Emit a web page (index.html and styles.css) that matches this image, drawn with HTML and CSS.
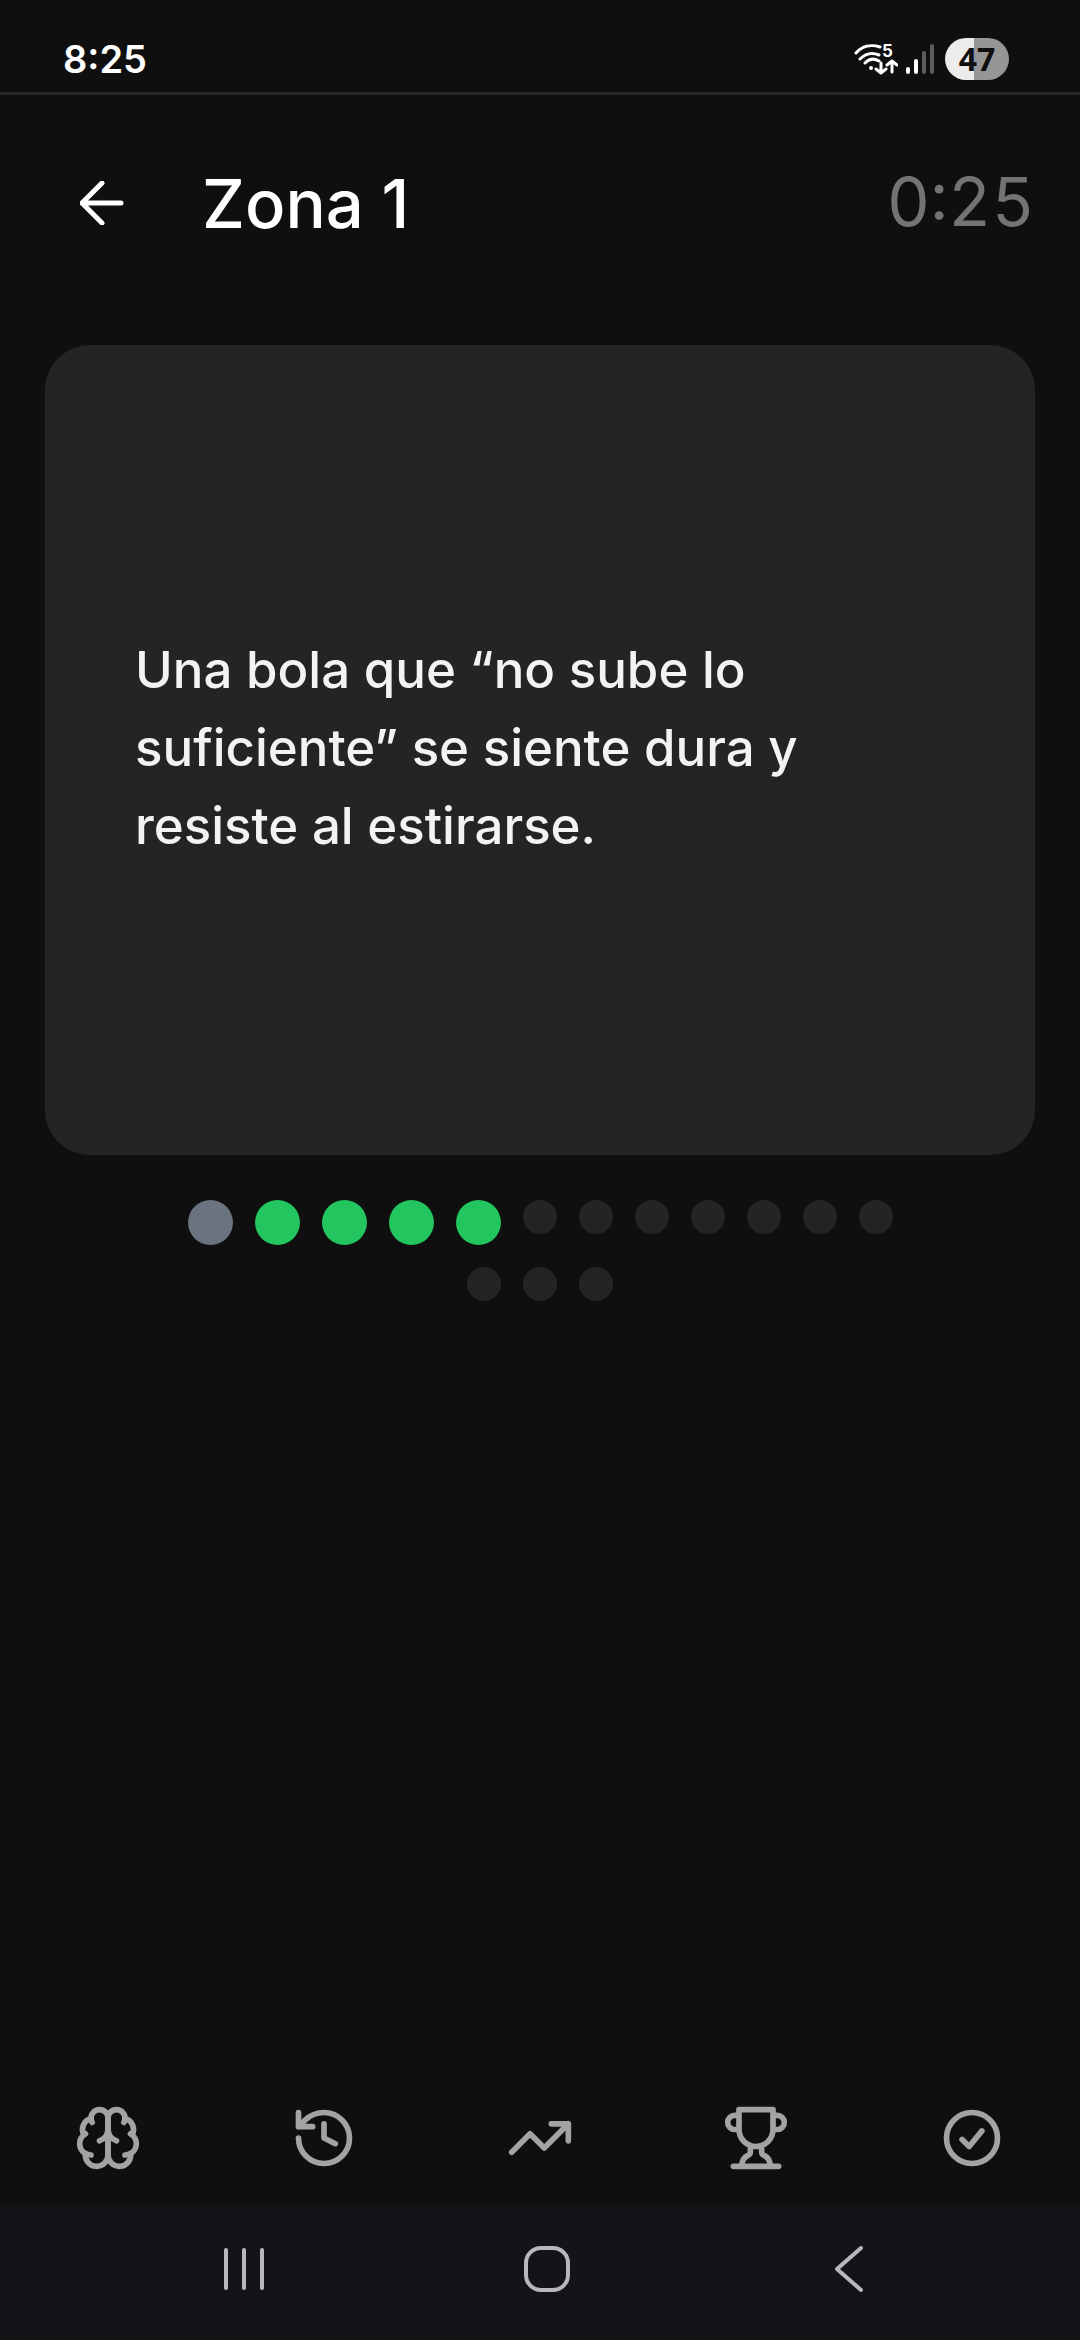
FILE: index.html
```html
<!DOCTYPE html>
<html lang="es">

<head>
    <meta charset="UTF-8">
    <meta name="viewport" content="width=device-width, initial-scale=1.0">
    <title>Zona 1</title>
    <link rel="stylesheet" href="styles.css">
</head>

<body>
    <div class="status-bar">
        <span class="clock">8:25</span>
        <div class="status-icons">
            <svg class="wifi" viewBox="0 0 44 36" aria-hidden="true">
                <path d="M2 12C8 5 17 3 26 6M6 18c5-5 12-7 19-4M11 22c4-4 9-5 14-2" />
                <circle cx="17" cy="27" r="2" />
                <text x="28" y="16">5</text>
                <path class="thin" d="M27 22v10m-5-4l5 4 5-4M38 31V20m-5 4l5-4 5 4" />
            </svg>
            <svg class="signal" viewBox="0 0 28 30" aria-hidden="true">
                <path d="M2 25v3M10 17v11" />
                <path class="off" d="M18 9v19M26 2v26" />
            </svg>
            <span class="battery">47</span>
        </div>
    </div>

    <header class="header">
        <button class="back" type="button" aria-label="Volver">
            <svg viewBox="0 0 44 44">
                <path d="M41 22H2M22 2L2 22l20 20" />
            </svg>
        </button>
        <h1>Zona 1</h1>
        <span class="timer">0:25</span>
    </header>

    <main class="content">
        <div class="card">
            <p>Una bola que “no sube lo suficiente” se siente dura y resiste al estirarse.</p>
        </div>
        <div class="dots">
            <span class="dot skipped"></span>
            <span class="dot done"></span>
            <span class="dot done"></span>
            <span class="dot done"></span>
            <span class="dot done"></span>
            <span class="dot"></span>
            <span class="dot"></span>
            <span class="dot"></span>
            <span class="dot"></span>
            <span class="dot"></span>
            <span class="dot"></span>
            <span class="dot"></span>
            <span class="dot"></span>
            <span class="dot"></span>
            <span class="dot"></span>
        </div>
    </main>

    <nav class="tabs">
        <a href="#entrenar" aria-label="Entrenar">
            <svg viewBox="0 0 24 24">
                <path d="M12 5a3 3 0 1 0-5.997.125 4 4 0 0 0-2.526 5.770 4 4 0 0 0 .556 6.588A4 4 0 1 0 12 18Z" />
                <path d="M12 5a3 3 0 1 1 5.997.125 4 4 0 0 1 2.526 5.770 4 4 0 0 1-.556 6.588A4 4 0 1 1 12 18Z" />
                <path d="M15 13a4.500 4.500 0 0 1-3-4 4.500 4.500 0 0 1-3 4" />
                <path d="M17.599 6.500a3 3 0 0 0 .399-1.375M6.003 5.125A3 3 0 0 0 6.401 6.500" />
                <path d="M3.477 10.896a4 4 0 0 1 .585-.396M19.938 10.500a4 4 0 0 1 .585.396" />
                <path d="M6 18a4 4 0 0 1-1.967-.516M19.967 17.484A4 4 0 0 1 18 18" />
            </svg>
        </a>
        <a href="#historial" aria-label="Historial">
            <svg viewBox="0 0 24 24">
                <path d="M3 12a9 9 0 1 0 9-9 9.750 9.750 0 0 0-6.740 2.740L3 8M3 3v5h5M12 7v5l4 2" />
            </svg>
        </a>
        <a href="#progreso" aria-label="Progreso">
            <svg viewBox="0 0 24 24">
                <path d="M2 17l6.500-6.500 5 5L22 7M16 7h6v6" />
            </svg>
        </a>
        <a href="#trofeos" aria-label="Trofeos">
            <svg viewBox="0 0 24 24">
                <path d="M6 9H4.500a2.500 2.500 0 0 1 0-5H6M18 9h1.500a2.500 2.500 0 0 0 0-5H18M4 22h16M10 14.660V17c0 .550-.470.980-.970 1.210C7.850 18.750 7 20.240 7 22M14 14.660V17c0 .550.470.980.970 1.210C16.150 18.750 17 20.240 17 22M18 2H6v7a6 6 0 0 0 12 0V2Z" />
            </svg>
        </a>
        <a href="#completado" aria-label="Completado">
            <svg viewBox="0 0 24 24">
                <circle cx="12" cy="12" r="9" />
                <path d="M8.500 12.500l2.500 2.500 4.500-5.500" />
            </svg>
        </a>
    </nav>

    <div class="system-bar">
        <button type="button" aria-label="Recientes">
            <svg viewBox="0 0 48 48">
                <path d="M6 5v38M24 5v38M42 5v38" />
            </svg>
        </button>
        <button type="button" aria-label="Inicio">
            <svg viewBox="0 0 48 48">
                <rect x="3" y="3" width="42" height="42" rx="15" />
            </svg>
        </button>
        <button type="button" aria-label="Atrás">
            <svg viewBox="0 0 48 48">
                <path d="M36 3L12 24l24 21" />
            </svg>
        </button>
    </div>
</body>

</html>
```
FILE: styles.css
```css
* {
    box-sizing: border-box;
}

body {
    margin: 0;
    min-height: 100vh;
    display: flex;
    flex-direction: column;
    background: #0f0f0f;
    color: #fff;
    font-family: 'Inter', sans-serif;
}

svg {
    display: block;
    fill: none;
    stroke: currentColor;
    stroke-linecap: round;
    stroke-linejoin: round;
}

button {
    padding: 0;
    border: none;
    background: none;
    color: inherit;
    cursor: pointer;
}

.status-bar {
    display: flex;
    align-items: center;
    justify-content: space-between;
    height: 95px;
    padding: 26px 71px 0 63px;
    border-bottom: 3px solid #292929;
}

.clock {
    font-size: 38px;
    font-weight: 600;
}

.status-icons {
    display: flex;
    align-items: center;
    gap: 8px;
}

.wifi {
    width: 44px;
    height: 36px;
    stroke-width: 3;
}

.wifi circle,
.wifi text {
    fill: currentColor;
    stroke: none;
}

.wifi text {
    font-size: 17px;
    font-weight: 700;
}

.wifi .thin {
    stroke-width: 3;
}

.signal {
    width: 28px;
    height: 30px;
    stroke-width: 4;
}

.signal .off {
    stroke: #5c5c5c;
}

.battery {
    width: 64px;
    height: 42px;
    margin-left: 3px;
    border-radius: 21px;
    background: linear-gradient(to right, #ececec 46%, #969696 46%);
    color: #0f0f0f;
    font-family: 'Open Sans', sans-serif;
    font-size: 32px;
    font-weight: 700;
    line-height: 42px;
    text-align: center;
}

.header {
    display: flex;
    align-items: center;
    height: 216px;
    padding: 0 45px;
}

.back {
    display: flex;
    align-items: center;
    justify-content: center;
    width: 114px;
    height: 114px;
}

.back svg {
    width: 44px;
    height: 44px;
    stroke-width: 5;
}

.header h1 {
    flex: 1;
    margin: 0 0 0 43px;
    font-size: 67px;
    font-weight: 500;
}

.timer {
    padding-bottom: 4px;
    color: #737373;
    font-size: 67px;
    font-variant-numeric: tabular-nums;
}

.content {
    flex: 1;
    padding: 34px 45px;
}

.card {
    display: flex;
    align-items: center;
    min-height: 810px;
    padding: 90px 90px 94px;
    border-radius: 45px;
    background: #242424;
}

.card p {
    margin: 0;
    color: #f3f3f3;
    font-size: 51px;
    font-weight: 500;
    line-height: 78px;
}

.dots {
    display: flex;
    flex-wrap: wrap;
    align-items: flex-start;
    justify-content: center;
    gap: 22px;
    max-width: 720px;
    margin: 45px auto 0;
}

.dot {
    width: 34px;
    height: 34px;
    border-radius: 50%;
    background: #242424;
}

.dot.done,
.dot.skipped {
    width: 45px;
    height: 45px;
}

.dot.done {
    background: #22c55e;
}

.dot.skipped {
    background: #6b7280;
}

.tabs {
    display: grid;
    grid-template-columns: repeat(5, 1fr);
    height: 135px;
    color: #a3a3a3;
}

.tabs a {
    display: flex;
    align-items: center;
    justify-content: center;
    color: inherit;
}

.tabs svg {
    width: 68px;
    height: 68px;
    stroke-width: 2;
}

.system-bar {
    display: flex;
    align-items: center;
    justify-content: space-between;
    height: 135px;
    padding: 0 207px 8px 220px;
    background: #121418;
    color: #b8b8bc;
}

.system-bar svg {
    width: 48px;
    height: 48px;
    stroke-width: 4;
}
```
